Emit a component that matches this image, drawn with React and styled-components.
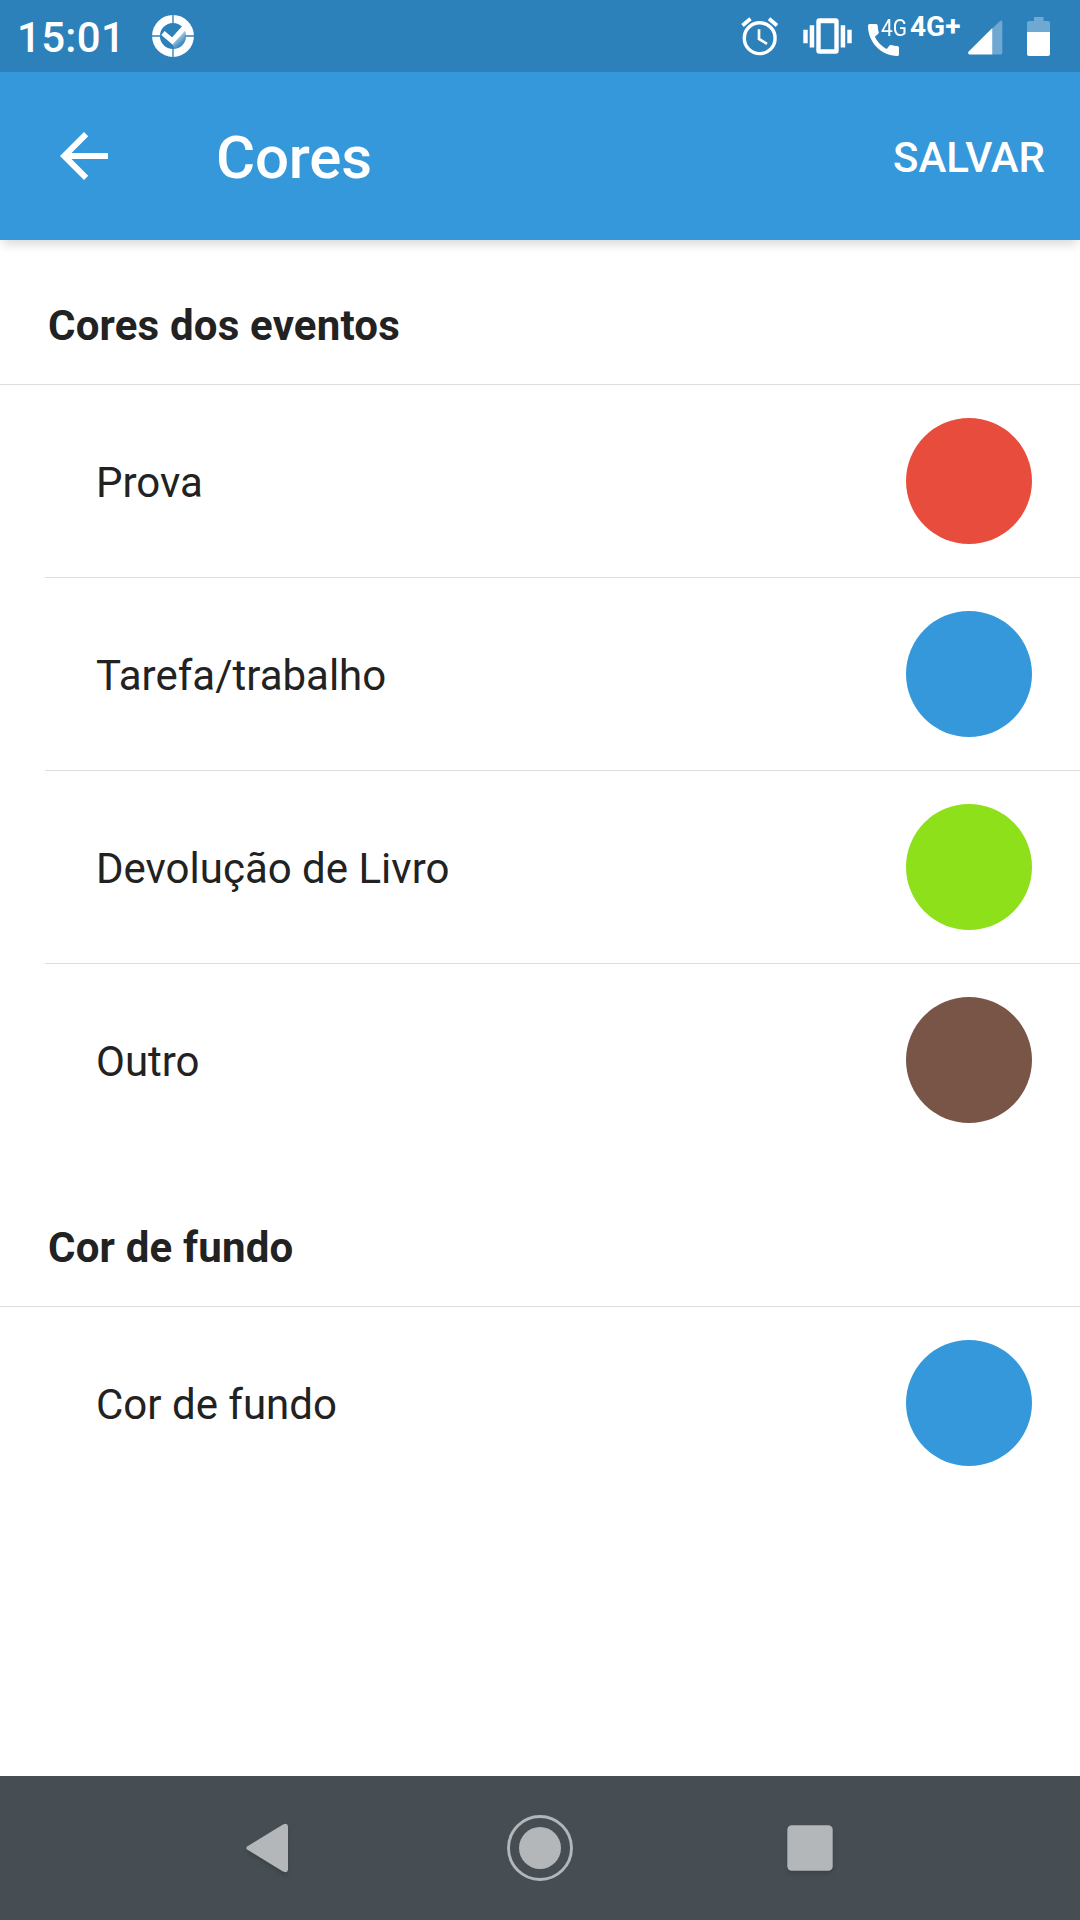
import React from "react"
import styled, { createGlobalStyle } from 'styled-components'

const GlobalStyle = createGlobalStyle`
* {
    box-sizing: border-box;
}
body {
    margin: 0;
    background: #ffffff;
    font-family: Roboto, 'Liberation Sans', sans-serif;
}
h1, h2, p {
    margin: 0;
}
`

const Screen = styled.div`
display: flex;
flex-direction: column;
width: 1080px;
height: 1920px;
background: #ffffff;
color: #222222;
`

const StatusBar = styled.div`
display: flex;
align-items: center;
height: 72px;
flex: none;
padding: 0 30px 0 17px;
background: #2d81bb;
color: #ffffff;
svg {
    display: block;
    flex: none;
}
`

const Clock = styled.span`
width: 135px;
font-size: 42px;
line-height: 70px;
font-weight: 500;
letter-spacing: 0.3px;
padding-top: 4px;
`

const StatusIcons = styled.div`
display: flex;
align-items: center;
height: 72px;
margin-left: auto;
`

const IconSlot = styled.span`
flex: none;
margin-left: ${({ $left }) => $left || 0}px;
padding-top: ${({ $top }) => $top || 0}px;
`

const Network = styled.span`
align-self: flex-start;
flex: none;
width: ${({ $width }) => $width}px;
margin-top: ${({ $top }) => $top}px;
margin-left: ${({ $left }) => $left || 0}px;
font-size: ${({ $size }) => $size}px;
line-height: 28px;
font-weight: ${({ $weight }) => $weight};
white-space: nowrap;
transform: scaleX(${({ $stretch }) => $stretch || 1});
transform-origin: left;
`

const AppBar = styled.header`
display: flex;
align-items: center;
height: 168px;
flex: none;
padding: 0 35px 0 48px;
background: #3598db;
color: #ffffff;
box-shadow: 0 7px 10px -3px rgba(0, 0, 0, 0.16);
`

const IconButton = styled.button`
display: flex;
align-items: center;
height: 72px;
border: 0;
padding: 0;
margin: 0 96px 0 0;
background: none;
color: inherit;
`

const Title = styled.h1`
flex: 1;
font-size: 60px;
line-height: 72px;
font-weight: 500;
letter-spacing: -0.2px;
padding-top: 4px;
`

const SaveButton = styled.button`
border: 0;
padding: 4px 0 0;
background: none;
color: inherit;
font-family: inherit;
font-size: 42px;
line-height: 48px;
font-weight: 500;
text-transform: uppercase;
`

const Content = styled.main`
flex: 1;
`

const Section = styled.section`
padding-top: ${({ $gap }) => $gap}px;
`

const SectionTitle = styled.h2`
height: 117px;
padding: 0 48px;
border-bottom: 1px solid #dedede;
font-size: 42px;
line-height: 115px;
font-weight: 700;
letter-spacing: 0.18px;
`

const Row = styled.div`
display: flex;
align-items: center;
justify-content: space-between;
height: 193px;
margin-left: 45px;
padding: 0 48px 0 51px;
border-bottom: 1px solid #dedede;
&:last-child {
    border-bottom-color: transparent;
}
`

const Label = styled.p`
font-size: 42px;
line-height: 54px;
padding-top: 3px;
`

const Swatch = styled.div`
width: 126px;
height: 126px;
border-radius: 50%;
background: ${({ $color }) => $color};
`

const NavBar = styled.nav`
display: flex;
align-items: center;
justify-content: center;
gap: 126px;
height: 144px;
flex: none;
background: #464e54;
box-shadow: inset 0 -1px #4a4b55;
`

const NavIcon = styled.svg`
display: block;
width: 144px;
height: 144px;
fill: #b3b7ba;
filter: ${({ $raised }) => $raised ? 'drop-shadow(0 3px 2px rgba(50, 60, 58, 0.6))' : 'none'};
`

const sections = [
    {
        title: 'Cores dos eventos',
        gap: 28,
        items: [
            { label: 'Prova', color: '#e84c3d' },
            { label: 'Tarefa/trabalho', color: '#3598db' },
            { label: 'Devolução de Livro', color: '#8ee01b' },
            { label: 'Outro', color: '#795548' },
        ],
    },
    {
        title: 'Cor de fundo',
        gap: 33,
        items: [{ label: 'Cor de fundo', color: '#3598db' }],
    },
]

function CheckBadge() {
    return (
        <svg width="42" height="42" viewBox="0 0 44 44">
            <defs>
                <linearGradient id="fade" gradientUnits="userSpaceOnUse" x1="24" y1="23" x2="31" y2="31">
                    <stop offset="0" stopColor="#fff" stopOpacity="0.7" />
                    <stop offset="1" stopColor="#fff" stopOpacity="0.05" />
                </linearGradient>
            </defs>
            <path d="M21 30L35 14L37 22L33 32L24 36Z" fill="url(#fade)" />
            <circle cx="22" cy="22" r="17.8" fill="none" stroke="#fff" strokeWidth="8.2" />
            <path d="M22 0V9M22 35V44M0 22H9M35 22H44" stroke="#2d81bb" strokeWidth="1.4" />
            <path d="M11.5 18.8L21.2 27.2L34 13" fill="none" stroke="#fff" strokeWidth="5.4" />
        </svg>
    )
}

function AlarmIcon() {
    return (
        <svg width="38" height="40" viewBox="0 0 38 40">
            <g fill="none" stroke="#fff">
                <circle cx="18.7" cy="22.2" r="15.4" strokeWidth="3.4" />
                <path d="M18 13.2V23L26 27.8" strokeWidth="2.7" />
                <path d="M1.500 9.500L9.500 2.800M28 2.800L36 9.500" strokeWidth="3.8" />
            </g>
        </svg>
    )
}

function VibrateIcon() {
    return (
        <svg width="50" height="38" viewBox="0 0.3 50 38" fill="#fff">
            <path fillRule="evenodd" d="M16.300 1.500H32.700Q35.700 1.500 35.700 4.500V34Q35.700 37 32.700 37H16.300Q13.300 37 13.300 34V4.500Q13.300 1.500 16.300 1.500ZM17.700 6.500V32.500H31.300V6.500Z" />
            <path d="M6.700 8.500H11.200V30.700H6.700ZM37.700 8.500H42.200V30.700H37.700ZM0.300 13H4.700V26.500H0.300ZM44.300 13H48.700V26.500H44.300Z" />
        </svg>
    )
}

function PhoneIcon() {
    return (
        <svg width="31" height="32" viewBox="3 3 18 18" preserveAspectRatio="none" fill="#fff">
            <path d="M20.01 15.38c-1.23 0-2.42-.2-3.53-.56a.977.977 0 0 0-1.01.24l-1.57 1.97c-2.83-1.35-5.48-3.9-6.89-6.83l1.95-1.66c.27-.28.35-.67.24-1.02-.37-1.11-.56-2.3-.56-3.53 0-.54-.45-.99-.99-.99H4.19C3.65 3 3 3.24 3 3.99 3 13.28 10.73 21 20.01 21c.71 0 .99-.63.99-1.18v-3.45c0-.54-.45-.99-.99-.99z" />
        </svg>
    )
}

function SignalIcon() {
    return (
        <svg width="35" height="35" viewBox="0 0 35 35">
            <path d="M24.3 8.500L32 1Q34.300 -0.500 34.300 2V32.500Q34.300 34.500 32.500 34.500H24.300Z" fill="#6fa8d1" />
            <path d="M24.300 8V34.500H1.500Q-0.800 34 0.700 31.500Z" fill="#fff" />
        </svg>
    )
}

function BatteryIcon() {
    return (
        <svg width="23" height="39" viewBox="0 0 23 39">
            <path d="M7 0H16.500V4H21Q23 4 23 6V15H0V6Q0 4 2 4H7Z" fill="#6fa8d1" />
            <path d="M0 15H23V37Q23 39 21 39H2Q0 39 0 37Z" fill="#fff" />
        </svg>
    )
}

function BackArrow() {
    return (
        <svg width="72" height="72" viewBox="0 0 24 24" fill="currentColor">
            <path d="M20 11H7.83l5.59-5.59L12 4l-8 8 8 8 1.41-1.41L7.83 13H20v-2z" />
        </svg>
    )
}

function ColorSection({ title, gap, items }) {
    return (
        <Section $gap={gap}>
            <SectionTitle>{title}</SectionTitle>
            {items.map(({ label, color }) => (
                <Row key={label}>
                    <Label>{label}</Label>
                    <Swatch $color={color} />
                </Row>
            ))}
        </Section>
    )
}

export default function App() {
    return (
        <Screen>
            <GlobalStyle />
            <StatusBar>
                <Clock>15:01</Clock>
                <CheckBadge />
                <StatusIcons>
                    <IconSlot><AlarmIcon /></IconSlot>
                    <IconSlot $left={24}><VibrateIcon /></IconSlot>
                    <IconSlot $left={15} $top={8}><PhoneIcon /></IconSlot>
                    <Network $size={24} $weight={400} $width={29} $top={14} $left={-18} $stretch={0.87}>4G</Network>
                    <Network $size={28} $weight={700} $width={57} $top={13}>4G+</Network>
                    <IconSlot $left={1} $top={2}><SignalIcon /></IconSlot>
                    <IconSlot $left={24}><BatteryIcon /></IconSlot>
                </StatusIcons>
            </StatusBar>
            <AppBar>
                <IconButton aria-label="Voltar"><BackArrow /></IconButton>
                <Title>Cores</Title>
                <SaveButton>Salvar</SaveButton>
            </AppBar>
            <Content>
                {sections.map((section) => <ColorSection key={section.title} {...section} />)}
            </Content>
            <NavBar>
                <NavIcon viewBox="0 0 144 144" $raised>
                    <path d="M49.500 70.200L85 48.500Q89.800 46.500 90 50.500V93.500Q89.800 97.500 85 95.500L49.500 73.800Q47 72 49.500 70.200Z" />
                </NavIcon>
                <NavIcon viewBox="0 0 144 144">
                    <circle cx="72" cy="72" r="31.500" fill="none" stroke="#b3b7ba" strokeWidth="2.900" />
                    <circle cx="72" cy="72" r="21" />
                </NavIcon>
                <NavIcon viewBox="0 0 144 144" $raised>
                    <rect x="49.300" y="49.300" width="45.400" height="45.400" rx="4.500" />
                </NavIcon>
            </NavBar>
        </Screen>
    )
}
